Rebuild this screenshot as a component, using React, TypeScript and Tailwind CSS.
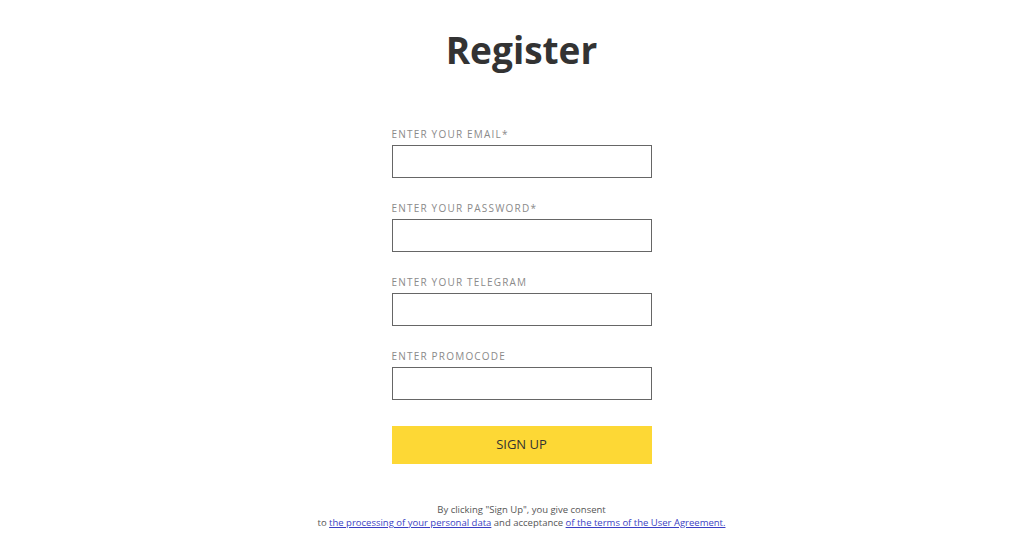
import { useState } from 'react';

const fields = [
  { label: 'Enter your email*', type: 'email' },
  { label: 'Enter your password*', type: 'password' },
  { label: 'Enter your telegram', type: 'text' },
  { label: 'Enter promocode', type: 'text' },
];

export default function App() {
  const [values, setValues] = useState<string[]>(fields.map(() => ''));

  return (
    <div
      className="min-h-[536px] w-full bg-white flex flex-col items-center pl-[19px]"
      style={{ fontFamily: '"Open Sans", "Liberation Sans", sans-serif' }}
    >
      <h1 className="mt-[26px] text-[37px] leading-[48px] font-bold text-[#333]">Register</h1>

      <form className="mt-[52px] w-[260px] flex flex-col gap-[22px]" onSubmit={(e) => e.preventDefault()}>
        {fields.map((field, i) => (
          <label key={field.label} className="flex flex-col">
            <span className="text-[10px] leading-[16px] uppercase tracking-[1.2px] text-[#8a8a8a] mb-[3px]">
              {field.label}
            </span>
            <input
              type={field.type}
              value={values[i]}
              onChange={(e) => setValues(values.map((v, j) => (j === i ? e.target.value : v)))}
              className="h-[33px] w-full border border-[#666] bg-white px-2 text-sm outline-none"
            />
          </label>
        ))}

        <button
          type="submit"
          className="mt-[4px] h-[38px] w-full bg-[#fdd835] text-[13px] text-[#333] uppercase"
        >
          Sign Up
        </button>
      </form>

      <p className="mt-[39px] text-center text-[9.5px] leading-[13px] text-[#555]">
        By clicking "Sign Up", you give consent
        <br />
        to{' '}
        <a href="#" className="text-[#3b3fc4] underline">
          the processing of your personal data
        </a>{' '}
        and acceptance{' '}
        <a href="#" className="text-[#3b3fc4] underline">
          of the terms of the User Agreement.
        </a>
      </p>
    </div>
  );
}
